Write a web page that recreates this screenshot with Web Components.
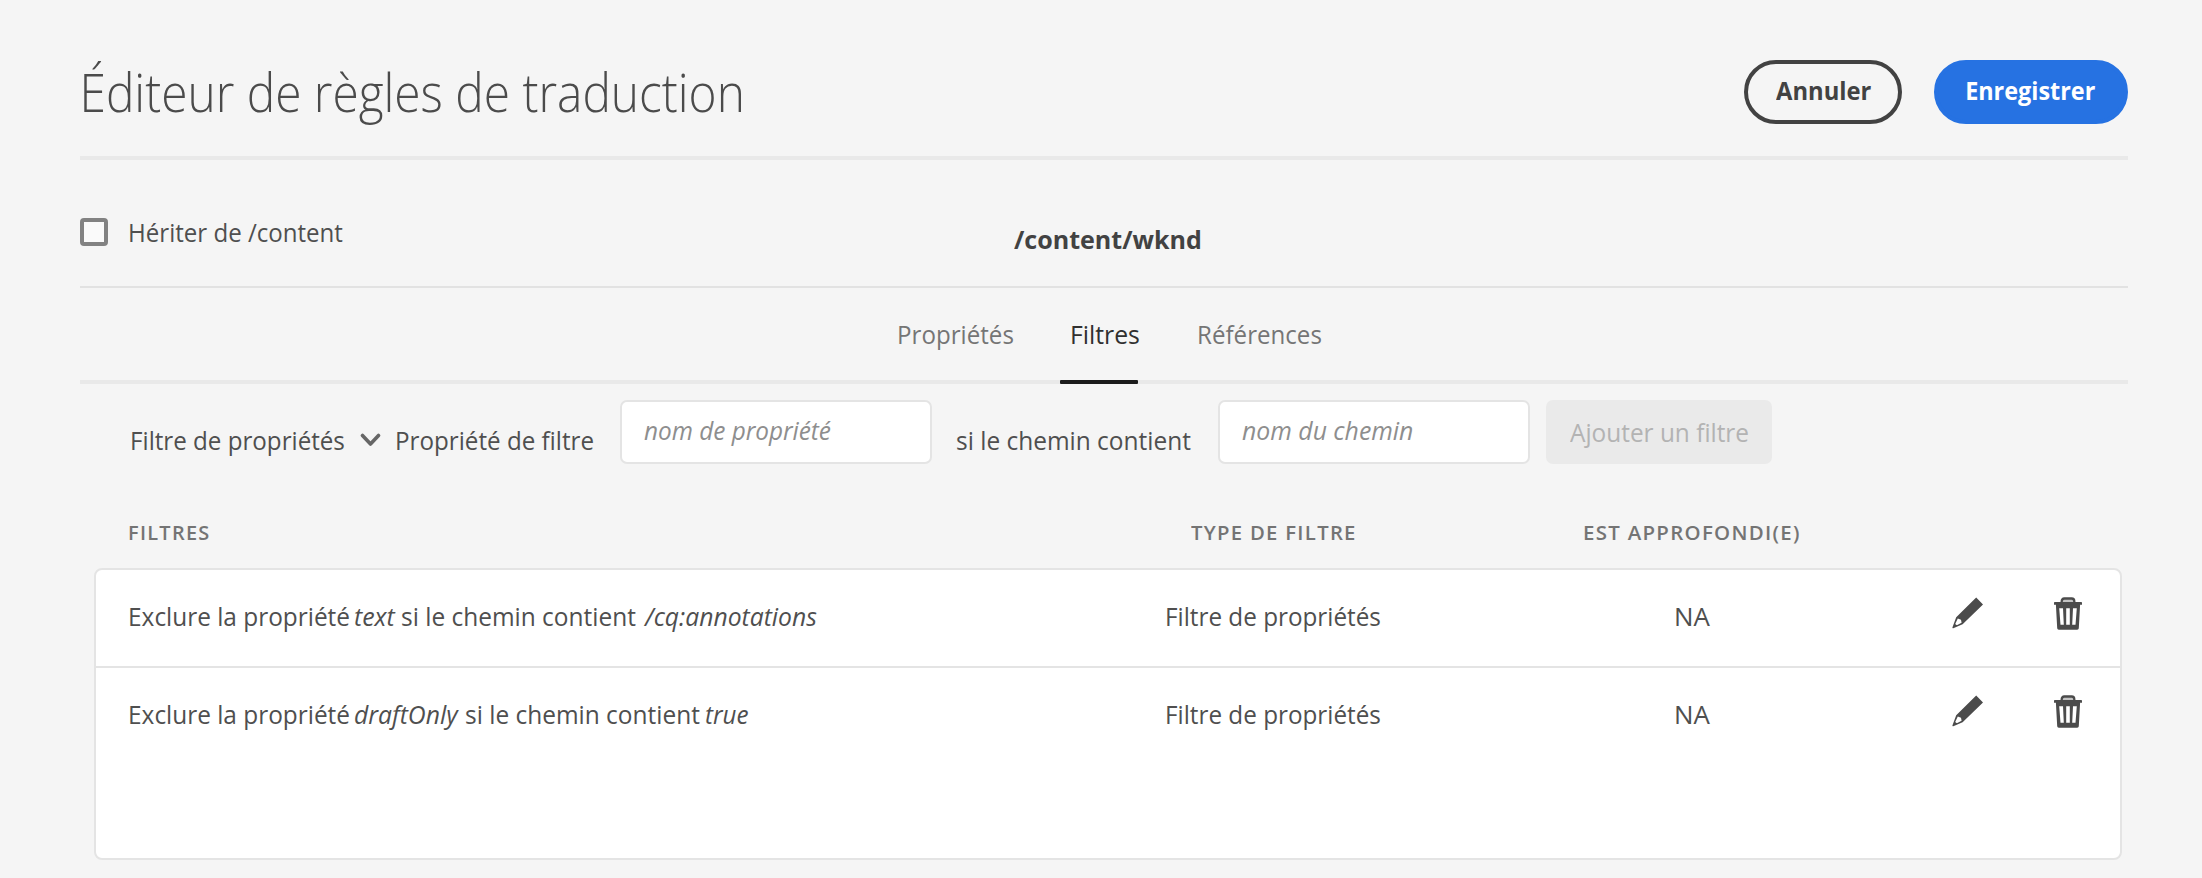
<!DOCTYPE html>
<html lang="fr">
<head>
<meta charset="utf-8">
<title>Éditeur de règles de traduction</title>
<style>
html,body{margin:0;height:100%;background:#f5f5f5}
body{font-family:"Open Sans","Noto Sans",sans-serif;color:#4f4f4f;overflow:hidden}
</style>
</head>
<body>
<rules-editor></rules-editor>
<script>
const ctx = document.createElement('canvas').getContext('2d');
const make = (name, html, setup) => customElements.define(name, class extends HTMLElement {
  connectedCallback() {
    if (this.shadowRoot) return;
    this.attachShadow({mode: 'open'}).innerHTML = html;
    if (setup) setup(this, this.shadowRoot);
  }
});

/* One line of text whose glyphs span exactly the width given in "w". */
make('fit-text', `<style>
:host{display:block;flex:none;height:var(--lh,30px);line-height:var(--lh,30px);font-size:25px;white-space:nowrap}
span{display:inline-block;transform-origin:0 50%;white-space:pre}
</style><span></span>`, (el, root) => {
  const span = root.querySelector('span'), w = +el.getAttribute('w');
  span.textContent = el.getAttribute('text');
  const cs = getComputedStyle(el);
  ctx.font = `${cs.fontStyle} ${cs.fontWeight} ${cs.fontSize} ${cs.fontFamily}`;
  ctx.letterSpacing = cs.letterSpacing === 'normal' ? '0px' : cs.letterSpacing;
  const m = ctx.measureText(span.textContent);
  const k = w / (m.actualBoundingBoxRight + m.actualBoundingBoxLeft);
  el.style.width = w + 'px';
  span.style.transform = `translateX(${m.actualBoundingBoxLeft * k}px) scaleX(${k})`;
});

make('pill-button', `<style>
:host{display:flex;box-sizing:border-box;height:64px;border-radius:32px;border:4px solid #424242;color:#424242;font-weight:700;justify-content:center;padding-top:11px}
:host([primary]){background:#2672e2;border-color:#2672e2;color:#fff}
</style><slot></slot>`);

make('check-box', `<style>
:host{display:flex;align-items:flex-start}
i{box-sizing:border-box;width:28px;height:28px;border:4px solid #828282;border-radius:4px;background:#fafafa;margin-right:22px}
</style><i></i><slot></slot>`);

make('text-field', `<style>
:host{display:block;box-sizing:border-box;width:312px;height:64px;background:#fff;border:2px solid #e4e4e4;border-radius:7px;padding:13px 0 0 22px;color:#8e8e8e;font-style:italic}
</style><slot></slot>`);

make('tab-item', `<style>
:host{display:flex;flex-direction:column;align-items:flex-start;height:65px;color:#757575}
:host([active]){color:#303030}
</style><slot></slot>`);

make('icon-edit', `<style>:host,svg{display:block}</style>
<svg width="32" height="32" viewBox="0 0 32 32"><path fill="#4b4b4b" fill-rule="evenodd" d="M24.2.6 31 7.4 10.6 27.2 1.300 31.200Q0 31.500.5 30.200L4.200 20.200ZM5.800 21.600 3.300 26.700Q3.800 28.300 5.300 28L9.600 25.800 9 22.700Z"/></svg>`);

make('icon-delete', `<style>:host,svg{display:block}</style>
<svg width="28" height="33" viewBox="0 0 28 33"><path d="M7.700 6V4.200Q7.700 1.500 10.300 1.500H17.700Q20.300 1.500 20.300 4.200V6" fill="#c4c4c4" stroke="#4b4b4b" stroke-width="2.300"/><path fill="#4b4b4b" fill-rule="evenodd" d="M.800 5H27.200Q28 5 28 5.800V7.800H26.100L24.800 31.300Q24.700 32.700 23.200 32.700H4.800Q3.300 32.700 3.200 31.300L1.900 7.800H0V5.800Q0 5 .800 5ZM5.200 11.300 6.500 27.800H9.800L9 11.300ZM12.200 11.300V27.800H15.800V11.300ZM19 11.300 18.200 27.800H21.500L22.800 11.300Z"/></svg>`);

make('icon-chevron', `<style>:host,svg{display:block}</style>
<svg width="21" height="14" viewBox="0 0 21 14"><path d="M2.500 2.500 10.500 11 18.500 2.500" fill="none" stroke="#666" stroke-width="3.600" stroke-linecap="round" stroke-linejoin="round"/></svg>`);

make('filter-row', `<style>
:host{display:grid;grid-template-columns:971.500px 346px 492px 143px;height:96px;padding-left:33px}
.c{display:flex;padding-top:31px}
.s{margin-left:-.500px;padding-left:1px}
.m{justify-content:center}
.s{gap:6.500px}
.icons{display:flex;justify-content:space-between;padding:27px 0 0 13px}
</style>
<div class="c s"><slot></slot></div>
<div class="c m"><fit-text w="213" text="Filtre de propriétés"></fit-text></div>
<div class="c m"><fit-text w="34" text="NA"></fit-text></div>
<div class="icons"><icon-edit></icon-edit><icon-delete></icon-delete></div>`);

make('rules-editor', `<style>
:host{display:block;width:2048px;padding:0 74px 0 80px;height:878px}
header{display:flex;height:96px;padding-top:60px;border-bottom:4px solid #e9e9e9}
header pill-button:first-of-type{width:158px;margin-left:auto}
header pill-button+pill-button{width:194px;margin-left:32px}
.title{--lh:60px;font-size:53px;font-weight:300;color:#4b4b4b;margin:2px 0 0 4px}
.path{display:flex;height:126px;border-bottom:2px solid #e2e2e2}
.path check-box{margin-top:58px;width:934px}
.path .p{font-weight:700;color:#424242;margin-top:64px}
nav{display:flex;height:92px;border-bottom:4px solid #e9e9e9}
tab-item{height:96px}
tab-item fit-text{margin-top:31px}
.active i{display:block;width:78px;height:4px;border-radius:1px;background:#1c1c1c;margin-top:31px}
.bar{display:flex;height:64px;padding:16px 0 0 52px}
.add{box-sizing:border-box;width:226px;height:64px;border-radius:7px;background:#eaeaea;color:#b3b3b3;padding:17px 0 0 24px;margin-left:16px}
.heads{display:grid;grid-template-columns:970.500px 346px 492px;padding:53px 0 0 49px;height:51px;font-weight:600;color:#747474}
.heads fit-text{font-size:20.500px;letter-spacing:1.300px}
.heads div{display:flex;justify-content:center}
.heads div:first-child{justify-content:flex-start}
.card{box-sizing:border-box;margin-left:14px;width:2028px;height:292px;background:#fff;border:2px solid #e4e4e4;border-radius:8px}
.card filter-row:first-child{border-bottom:2px solid #e4e4e4}
.card .i{font-style:italic}
</style>
<header>
 <fit-text class="title" w="657" text="Éditeur de règles de traduction"></fit-text>
 <pill-button><fit-text w="95" text="Annuler"></fit-text></pill-button>
 <pill-button primary><fit-text w="128" text="Enregistrer"></fit-text></pill-button>
</header>
<section class="path">
 <check-box><fit-text w="213" text="Hériter de /content" style="margin-top:-1px"></fit-text></check-box>
 <fit-text class="p" w="186" text="/content/wknd"></fit-text>
</section>
<nav>
 <tab-item style="margin-left:819px"><fit-text w="114" text="Propriétés"></fit-text></tab-item>
 <tab-item active class="active" style="margin-left:47px"><fit-text w="67" text="Filtres" style="margin-left:12px"></fit-text><i></i></tab-item>
 <tab-item style="margin-left:60px"><fit-text w="122" text="Références"></fit-text></tab-item>
</nav>
<section class="bar">
 <fit-text w="212" text="Filtre de propriétés" style="margin-top:25px"></fit-text>
 <icon-chevron style="margin:33px 0 0 16px"></icon-chevron>
 <fit-text w="196" text="Propriété de filtre" style="margin:25px 0 0 16px"></fit-text>
 <text-field style="margin-left:27px"><fit-text w="187.500" text="nom de propriété"></fit-text></text-field>
 <fit-text w="234" text="si le chemin contient" style="margin:25px 0 0 25px"></fit-text>
 <text-field style="margin-left:27px"><fit-text w="171" text="nom du chemin"></fit-text></text-field>
 <div class="add"><fit-text w="178" text="Ajouter un filtre"></fit-text></div>
</section>
<section class="heads">
 <div><fit-text w="80" text="FILTRES"></fit-text></div>
 <div><fit-text w="164" text="TYPE DE FILTRE"></fit-text></div>
 <div><fit-text w="215" text="EST APPROFONDI(E)"></fit-text></div>
</section>
<section class="card">
 <filter-row><fit-text w="219" text="Exclure la propriété"></fit-text><fit-text class="i" w="40.500" text="text"></fit-text><fit-text w="234" text="si le chemin contient"></fit-text><fit-text class="i" w="174" text="/cq:annotations"></fit-text></filter-row>
 <filter-row><fit-text w="219" text="Exclure la propriété"></fit-text><fit-text class="i" w="104" text="draftOnly"></fit-text><fit-text w="234" text="si le chemin contient"></fit-text><fit-text class="i" w="42" text="true"></fit-text></filter-row>
</section>`);
</script>
</body>
</html>
